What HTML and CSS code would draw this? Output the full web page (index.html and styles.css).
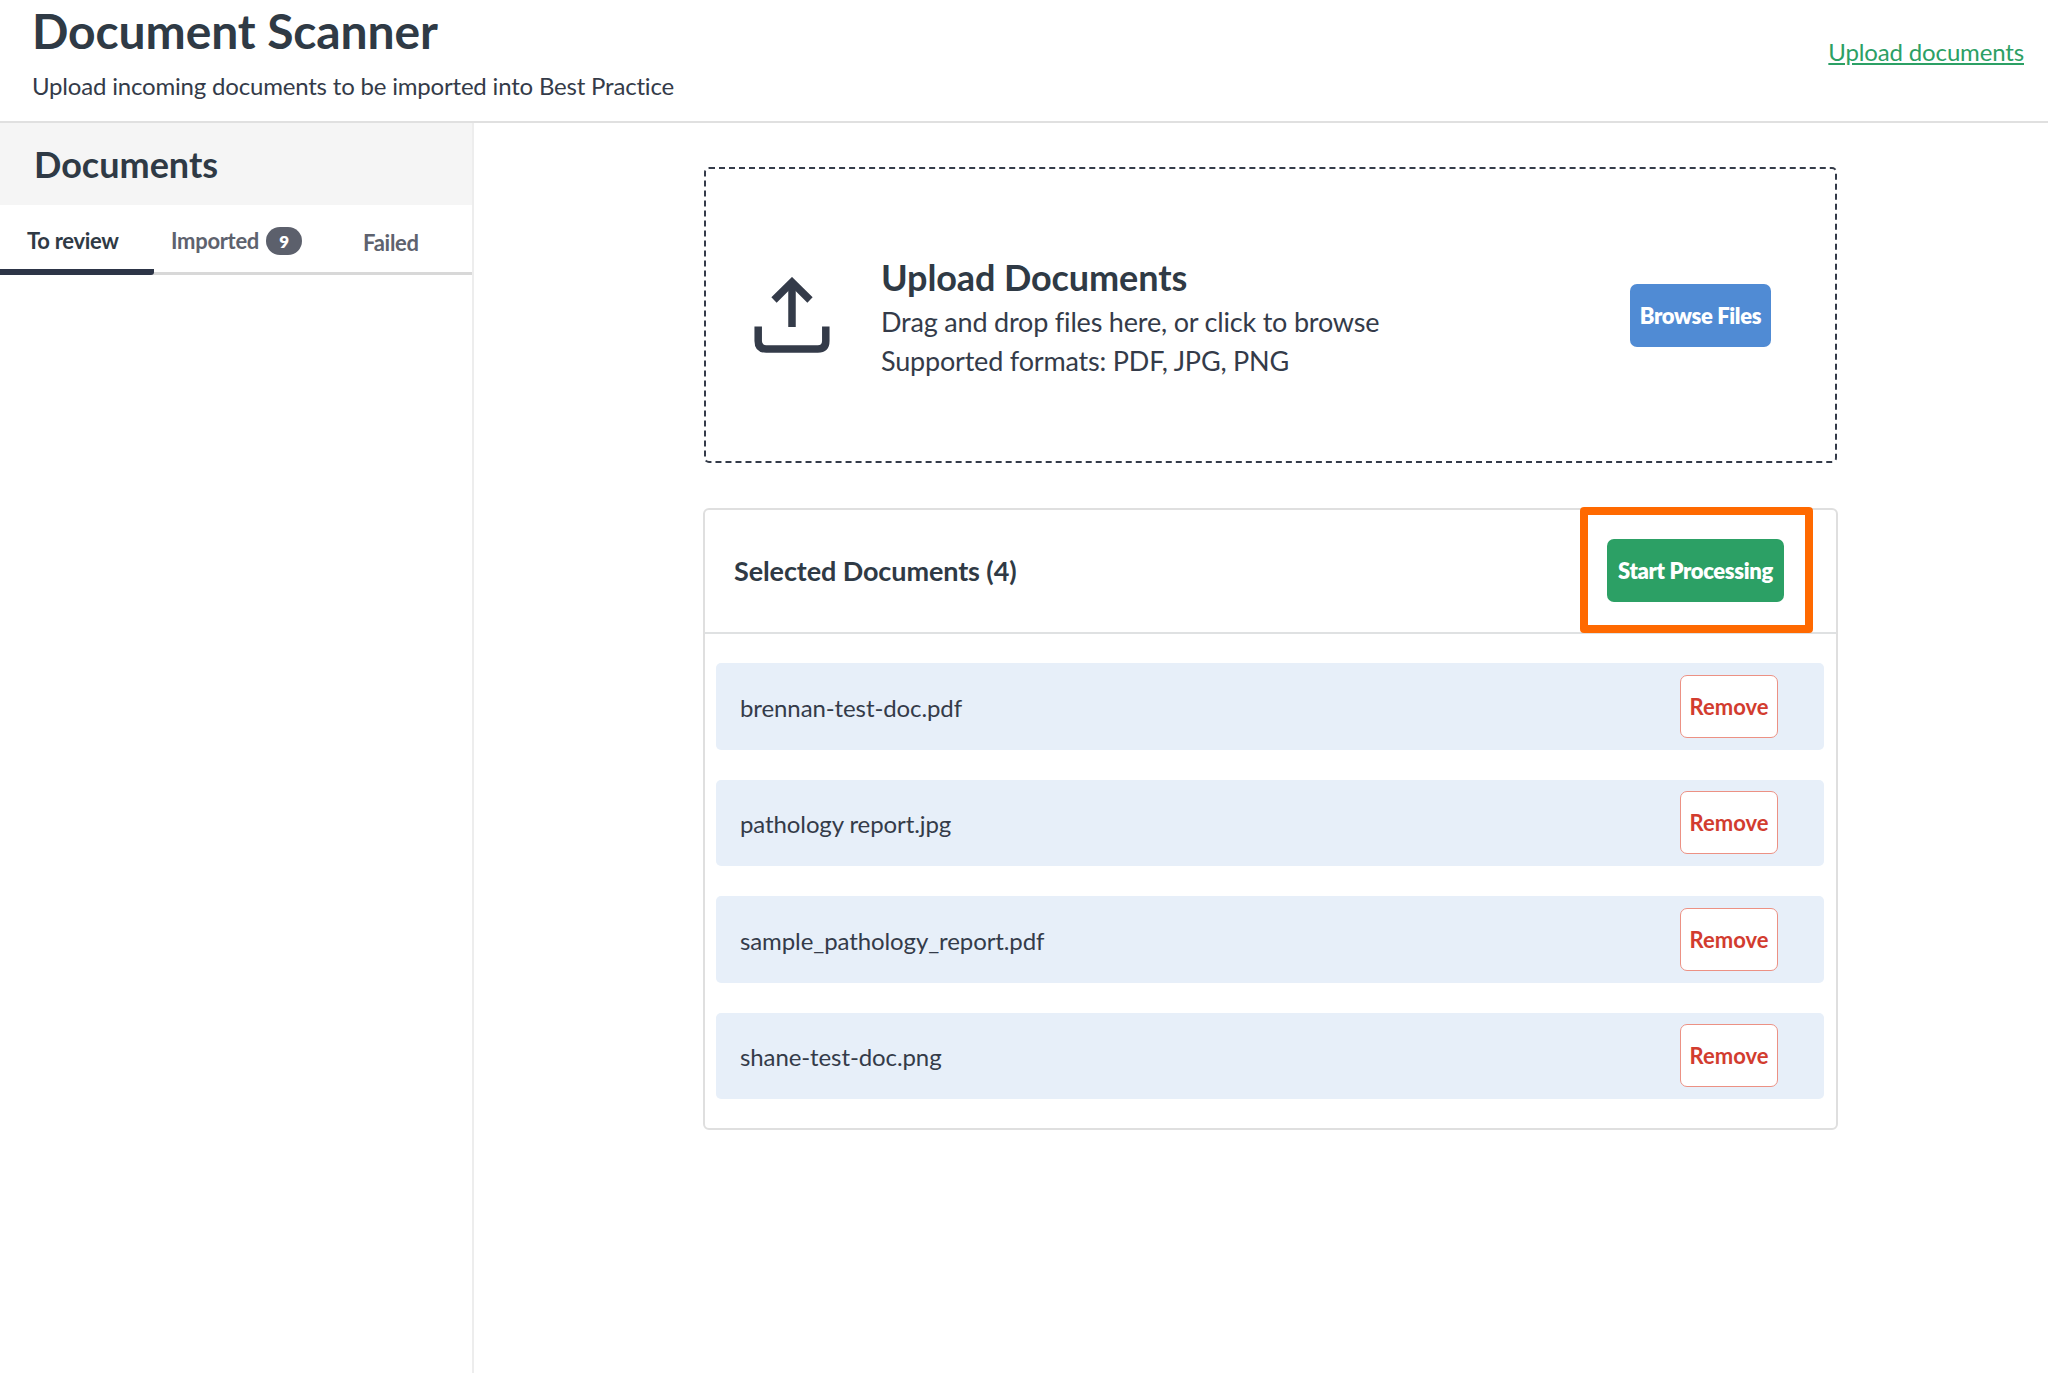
FILE: index.html
```html
<!DOCTYPE html>
<html lang="en">
<head>
    <meta charset="UTF-8">
    <meta name="viewport" content="width=device-width, initial-scale=1.0">
    <title>Document Scanner</title>
    <link rel="stylesheet" href="styles.css">
</head>
<body>
    <header class="header">
        <div class="header-text">
            <h1>Document Scanner</h1>
            <p>Upload incoming documents to be imported into Best Practice</p>
        </div>
        <a href="#" class="upload-link">Upload documents</a>
    </header>

    <div class="layout">
        <aside class="sidebar">
            <h2 class="sidebar-title">Documents</h2>
            <nav class="tabs">
                <a class="tab active">To review</a>
                <a class="tab imported">Imported <span class="badge">9</span></a>
                <a class="tab failed">Failed</a>
            </nav>
        </aside>

        <main class="content">
            <section class="dropzone">
                <svg class="upload-icon" width="76" height="76" viewBox="0 0 76 76" fill="none" stroke="#343b49" stroke-width="7.5">
                    <path d="M38 50V7"/>
                    <path d="M20 23L38 5.2L56 23"/>
                    <path d="M4.2 49.5V64Q4.2 72 12.2 72H63.8Q71.8 72 71.8 64V49.5"/>
                </svg>
                <div class="dropzone-text">
                    <h2>Upload Documents</h2>
                    <p>Drag and drop files here, or click to browse</p>
                    <p>Supported formats: PDF, JPG, PNG</p>
                </div>
                <button class="btn btn-browse">Browse Files</button>
            </section>

            <section class="card">
                <div class="card-header">
                    <h3>Selected Documents (4)</h3>
                    <div class="highlight">
                        <button class="btn btn-start">Start Processing</button>
                    </div>
                </div>
                <div class="file-list">
                    <div class="file">
                        <span>brennan-test-doc.pdf</span>
                        <button class="btn btn-remove">Remove</button>
                    </div>
                    <div class="file">
                        <span>pathology report.jpg</span>
                        <button class="btn btn-remove">Remove</button>
                    </div>
                    <div class="file">
                        <span>sample_pathology_report.pdf</span>
                        <button class="btn btn-remove">Remove</button>
                    </div>
                    <div class="file">
                        <span>shane-test-doc.png</span>
                        <button class="btn btn-remove">Remove</button>
                    </div>
                </div>
            </section>
        </main>
    </div>
</body>
</html>
```
FILE: styles.css
```css
* {
    margin: 0;
    padding: 0;
    box-sizing: border-box;
}

body {
    font-family: Lato, "Liberation Sans", sans-serif;
    background: #fff;
    color: #343b49;
    height: 1373px;
    display: flex;
    flex-direction: column;
    overflow: hidden;
}

h1, h2, h3 {
    font-weight: 700;
    color: #2f3a45;
    letter-spacing: -0.1px;
    white-space: nowrap;
}

.header {
    display: flex;
    justify-content: space-between;
    height: 123px;
    padding: 0 24px 0 32px;
    border-bottom: 2px solid #e0e0e0;
}

.header h1 {
    font-size: 48px;
    line-height: 61px;
}

.header p {
    font-size: 24px;
    line-height: 30px;
    letter-spacing: -0.19px;
    margin-top: 10px;
}

.upload-link {
    font-size: 24px;
    line-height: 30px;
    letter-spacing: -0.15px;
    margin-top: 37px;
    color: #2ca065;
}

.layout {
    display: flex;
    flex: 1;
}

.sidebar {
    width: 474px;
    border-right: 2px solid #ededed;
}

.sidebar-title {
    height: 82px;
    padding-left: 34px;
    background: #f5f5f5;
    font-size: 36px;
    line-height: 82px;
    letter-spacing: 0;
}

.tabs {
    display: flex;
    height: 70px;
    box-shadow: inset 0 -3px 0 #d8d8d8;
    font-size: 22px;
    font-weight: 700;
    letter-spacing: -0.3px;
    color: #5e626e;
    line-height: 28px;
    white-space: nowrap;
}

.tab {
    padding-top: 22px;
}

.tab.active {
    width: 154px;
    padding-left: 27px;
    color: #2f3a45;
    border-bottom: 6px solid #2d3547;
    border-radius: 0 0 3px 0;
}

.tab.imported {
    display: flex;
    gap: 7px;
    padding-left: 17px;
}

.tab.failed {
    padding: 24px 0 0 61px;
}

.badge {
    width: 36px;
    height: 28px;
    border-radius: 14px;
    background: #5c606c;
    color: #fff;
    font-size: 17px;
    font-weight: 800;
    line-height: 29px;
    text-align: center;
}

.content {
    flex: 1;
    padding: 44px 210px 0 229px;
}

.dropzone {
    display: flex;
    align-items: center;
    width: 1133px;
    height: 296px;
    margin-left: 1px;
    padding: 0 64px 0 48px;
    border: 2px dashed #343b49;
    border-radius: 5px;
}

.upload-icon {
    flex: none;
}

.dropzone-text {
    flex: 1;
    padding: 6px 0 0 51px;
}

.dropzone h2 {
    font-size: 36px;
    line-height: 46px;
    margin: -2px 0 2px;
}

.dropzone p {
    font-size: 27px;
    line-height: 39px;
    letter-spacing: -0.19px;
}

.btn {
    height: 63px;
    border: none;
    border-radius: 7px;
    color: #fff;
    font-family: inherit;
    font-size: 22px;
    font-weight: 800;
    letter-spacing: -0.35px;
    text-align: center;
    white-space: nowrap;
}

.btn-browse {
    width: 141px;
    background: #508bd4;
}

.card {
    width: 1135px;
    height: 622px;
    margin-top: 45px;
    border: 2px solid #dfdfdf;
    border-radius: 6px;
}

.card-header {
    display: flex;
    justify-content: space-between;
    height: 124px;
    padding: 0 23px 0 29px;
    border-bottom: 2px solid #dfe1e2;
}

.card-header h3 {
    font-size: 27px;
    line-height: 121px;
}

.highlight {
    width: 233px;
    height: 126px;
    margin-top: -3px;
    padding: 24px 0 0 19px;
    border: 8px solid #ff6900;
    border-radius: 4px;
}

.btn-start {
    width: 177px;
    background: #2ca065;
}

.file-list {
    display: flex;
    flex-direction: column;
    gap: 30px;
    padding: 29px 12px 0 11px;
}

.file {
    display: flex;
    justify-content: space-between;
    align-items: center;
    height: 86.5px;
    padding: 0 46px 0 24px;
    background: #e7eff9;
    border-radius: 5px;
    font-size: 24px;
    letter-spacing: -0.1px;
}

.file span {
    padding-top: 2px;
}

.btn-remove {
    width: 98px;
    background: #fff;
    border: 1.5px solid #ec9184;
    color: #d23c2f;
    font-weight: 700;
    letter-spacing: 0;
}
```
